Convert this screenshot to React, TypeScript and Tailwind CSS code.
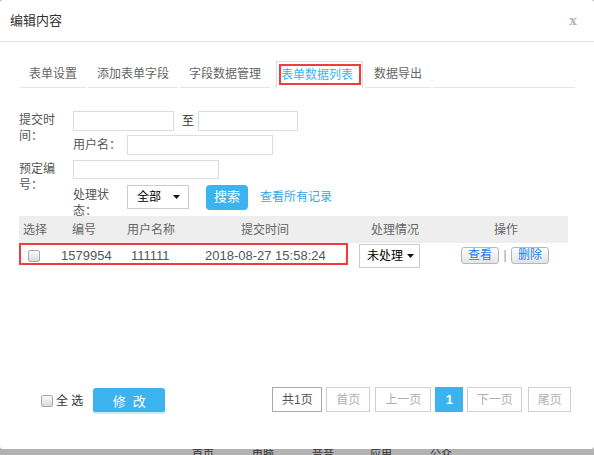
import React from "react";

function Check({ className = "" }: { className?: string }) {
  return (
    <span
      className={`inline-block w-[12px] h-[12px] rounded-[2px] border border-[#a9a9a9] bg-linear-to-b from-[#fbfbfb] to-[#d9d9d9] ${className}`}
    />
  );
}

function Arrow() {
  return (
    <svg width="7" height="4" viewBox="0 0 7 4" className="shrink-0">
      <path d="M0 0h7L3.5 4z" fill="#111" />
    </svg>
  );
}

export default function App() {
  return (
    <div className="w-[594px] h-[455px] overflow-hidden bg-[#b2b2b2] font-['Liberation_Sans','Noto_Sans_CJK_SC',sans-serif]">
      <div className="h-[449px] bg-white rounded-[3px] flex flex-col">
        {/* header */}
        <div className="h-[42px] shrink-0 border-b border-[#e5e5e5] flex items-center justify-between pl-[10px] pr-[17px]">
          <span className="text-[13px] text-[#333] leading-[16px]">编辑内容</span>
          <span className="text-[13px] font-bold text-[#b8b8b8] font-['DejaVu_Serif',serif] leading-none">x</span>
        </div>

        {/* tabs */}
        <div className="mt-[19px] ml-[20px] mr-[19px] h-[27px] shrink-0 flex gap-[2px] text-[12px] leading-[16px] text-[#666]">
          <div className="px-[9px] border-b border-[#e6e6e6] flex items-center">表单设置</div>
          <div className="px-[9px] border-b border-[#e6e6e6] flex items-center">添加表单字段</div>
          <div className="px-[9px] border-b border-[#e6e6e6] flex items-center">字段数据管理</div>
          <div className="ml-[4px] w-[87px] border border-b-0 border-[#dedede] bg-white">
            <div className="ml-[2px] mt-[2px] w-[82px] h-[21px] border-2 border-[#f23c3c] flex items-center text-[#3cb4ef]">
              表单数据列表
            </div>
          </div>
          <div className="px-[9px] border-b border-[#e6e6e6] flex items-center">数据导出</div>
          <div className="flex-1 border-b border-[#e6e6e6]" />
        </div>

        {/* form */}
        <div className="mt-[23px] px-[19px] text-[12px] text-[#555] leading-[16px] shrink-0">
          <div className="flex">
            <div className="w-[54px] pt-[1px]">
              <div className="w-[40px]">提交时间：</div>
            </div>
            <div className="flex flex-col gap-[4px]">
              <div className="flex items-center h-[20px]">
                <input className="w-[101px] h-[20px] border border-[#dcdcdc] bg-white outline-none" />
                <span className="ml-[8px] mr-[4px] text-[#333]">至</span>
                <input className="w-[100px] h-[20px] border border-[#dcdcdc] bg-white outline-none" />
              </div>
              <div className="flex items-center h-[20px]">
                <span className="w-[54px]">用户名：</span>
                <input className="w-[146px] h-[20px] border border-[#dcdcdc] bg-white outline-none" />
              </div>
            </div>
          </div>

          <div className="flex mt-[5px]">
            <div className="w-[54px] pt-[1px]">
              <div className="w-[40px]">预定编号：</div>
            </div>
            <div className="flex flex-col">
              <input className="w-[146px] h-[19px] border border-[#dcdcdc] bg-white outline-none" />
              <div className="flex items-center h-[26px] mt-[5px]">
                <div className="w-[54px] self-start pt-[3px]">
                  <div className="w-[40px]">处理状态：</div>
                </div>
                <div className="w-[62px] h-[24px] border border-[#cccccc] flex items-center justify-between pl-[9px] pr-[8px] text-[12px] text-black">
                  <span>全部</span>
                  <Arrow />
                </div>
                <button className="ml-[17px] w-[42px] h-[25px] rounded-[4px] bg-[#3bb3ef] text-white text-[13px] leading-[16px] flex items-center justify-center">
                  搜索
                </button>
                <span className="ml-[12px] text-[#34a7e8]">查看所有记录</span>
              </div>
            </div>
          </div>
        </div>

        {/* table */}
        <div className="mt-[6px] ml-[19px] w-[549px] shrink-0">
          <div className="relative h-[27px] bg-[#eeeeee] flex items-center text-[12px] leading-[16px] text-[#666]">
            <span className="w-[53px] pl-[4px]">选择</span>
            <span className="w-[55px]">编号</span>
            <span className="w-[114px]">用户名称</span>
            <span className="w-[130px]">提交时间</span>
            <span className="w-[123px]">处理情况</span>
            <span>操作</span>
          </div>
          <div className="h-[27px] flex items-start">
            <div className="w-[329px] h-[22px] border-2 border-[#f03c3c] pt-[3px] flex items-center text-[13px] leading-[16px] text-[#555]">
              <span className="w-[40px] pl-[7px] flex items-center">
                <Check />
              </span>
              <span className="w-[70px]">1579954</span>
              <span className="w-[74px]">111111</span>
              <span>2018-08-27 15:58:24</span>
            </div>
            <div className="ml-[11px] mt-[1px] w-[61px] h-[24px] border border-[#cccccc] flex items-center justify-between pl-[7px] pr-[5px] text-[12px] leading-[16px] text-black">
              <span>未处理</span>
              <Arrow />
            </div>
            <button className="ml-[41px] mt-[4px] w-[38px] h-[17px] rounded-[3px] border border-[#a3bcd3] bg-linear-to-b from-white to-[#e4e4e4] text-[12px] leading-[15px] text-[#1a80e6] flex items-center justify-center">
              查看
            </button>
            <span className="mt-[4px] w-[12px] h-[17px] text-center text-[12px] leading-[17px] text-[#999]">|</span>
            <button className="mt-[4px] w-[38px] h-[17px] rounded-[3px] border border-[#a3bcd3] bg-linear-to-b from-white to-[#e4e4e4] text-[12px] leading-[15px] text-[#1a80e6] flex items-center justify-center">
              删除
            </button>
          </div>
        </div>

        {/* footer */}
        <div className="mt-[117px] h-[28px] flex items-center shrink-0 text-[12px] leading-[16px]">
          <Check className="ml-[41px]" />
          <span className="ml-[3px] text-[#333]">全 选</span>
          <button className="ml-[10px] w-[72px] h-[26px] rounded-[3px] bg-[#3bb3ef] border-b-2 border-[#cdeafb] pt-[4px] text-white text-[13px] leading-[16px] flex items-center justify-center gap-[7px]">
            <span>修</span>
            <span>改</span>
          </button>
          <div className="ml-[107px] self-start flex text-[12px] leading-[16px]">
            <span className="w-[50px] h-[25px] border border-[#aaaaaa] text-[#555] flex items-center justify-center">共1页</span>
            <span className="ml-[4px] w-[44px] h-[25px] border border-[#d0d0d0] text-[#b0b0b0] flex items-center justify-center">首页</span>
            <span className="ml-[5px] w-[56px] h-[25px] border border-[#d0d0d0] text-[#b0b0b0] flex items-center justify-center">上一页</span>
            <span className="ml-[4px] w-[28px] h-[25px] bg-[#3bb3ef] text-white font-bold text-[13px] flex items-center justify-center">1</span>
            <span className="ml-[4px] w-[55px] h-[25px] border border-[#d0d0d0] text-[#b0b0b0] flex items-center justify-center">下一页</span>
            <span className="ml-[6px] w-[43px] h-[25px] border border-[#d0d0d0] text-[#b0b0b0] flex items-center justify-center">尾页</span>
          </div>
        </div>
      </div>

      {/* page behind */}
      <div className="h-[6px] flex pl-[192px] text-[11px] leading-[11px] text-[#333] overflow-hidden">
        <span className="w-[60px]">首页</span>
        <span className="w-[60px]">电脑</span>
        <span className="w-[58px]">音音</span>
        <span className="w-[60px]">应用</span>
        <span className="w-[60px]">公众</span>
      </div>
    </div>
  );
}
